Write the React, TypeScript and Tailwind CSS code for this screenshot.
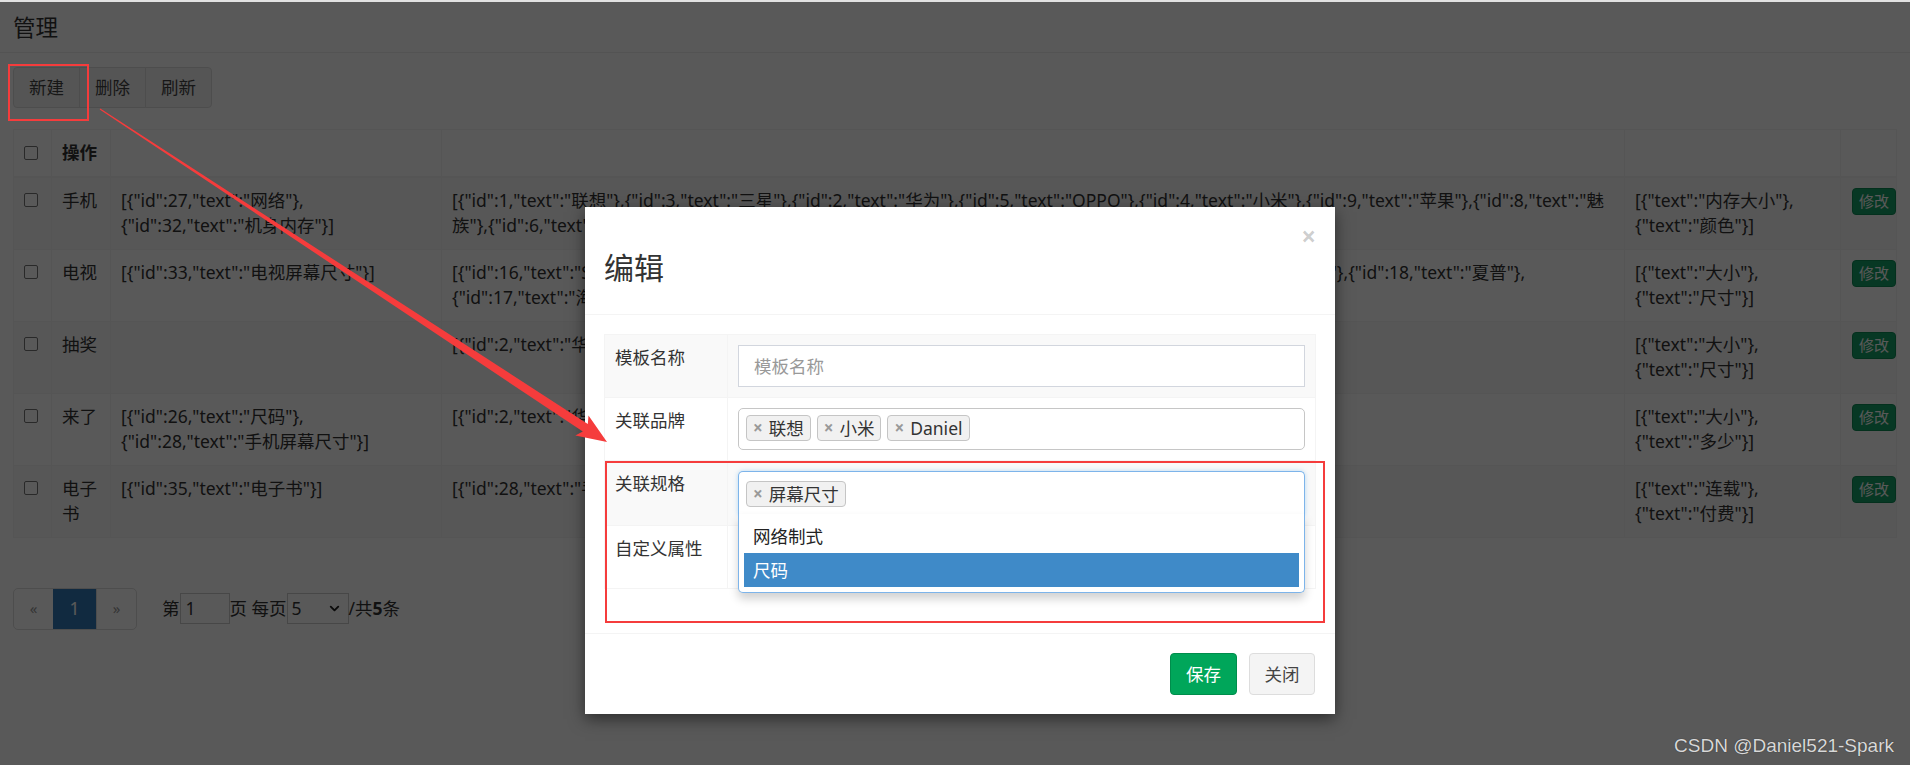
import clsx from 'clsx';
import { ChevronDown } from 'lucide-react';

type Row = {
  name: string;
  specs: string[];
  brands: string[];
  attrs: string[];
};

const rows: Row[] = [
  {
    name: '手机',
    specs: ['[{"id":27,"text":"网络"},', '{"id":32,"text":"机身内存"}]'],
    brands: [
      '[{"id":1,"text":"联想"},{"id":3,"text":"三星"},{"id":2,"text":"华为"},{"id":5,"text":"OPPO"},{"id":4,"text":"小米"},{"id":9,"text":"苹果"},{"id":8,"text":"魅',
      '族"},{"id":6,"text":"中兴"}]',
    ],
    attrs: ['[{"text":"内存大小"},', '{"text":"颜色"}]'],
  },
  {
    name: '电视',
    specs: ['[{"id":33,"text":"电视屏幕尺寸"}]'],
    brands: [
      '[{"id":16,"text":"Sony"},{"id":19,"text":"创维"},{"id":20,"text":"康佳"},{"id":21,"text":"长虹"},{"id":22,"text":"海尔"},{"id":18,"text":"夏普"},',
      '{"id":17,"text":"海信"}]',
    ],
    attrs: ['[{"text":"大小"},', '{"text":"尺寸"}]'],
  },
  {
    name: '抽奖',
    specs: [],
    brands: ['[{"id":2,"text":"华为"}]'],
    attrs: ['[{"text":"大小"},', '{"text":"尺寸"}]'],
  },
  {
    name: '来了',
    specs: ['[{"id":26,"text":"尺码"},', '{"id":28,"text":"手机屏幕尺寸"}]'],
    brands: ['[{"id":2,"text":"华为"},{"id":4,"text":"小米"}]'],
    attrs: ['[{"text":"大小"},', '{"text":"多少"}]'],
  },
  {
    name: '电子书',
    specs: ['[{"id":35,"text":"电子书"}]'],
    brands: ['[{"id":28,"text":"手机"}]'],
    attrs: ['[{"text":"连载"},', '{"text":"付费"}]'],
  },
];

function Checkbox() {
  return (
    <div className="flex h-[25px] items-center">
      <span className="inline-block size-[14px] rounded-[2px] border border-[#767676] bg-white" />
    </div>
  );
}

function Tag({ children }: { children: React.ReactNode }) {
  return (
    <span className="inline-flex h-[26px] items-center rounded-[4px] border border-[#c5c5c5] bg-[#f1f1f1] px-[6px] leading-[24px] text-[#333]">
      <span className="mr-[6px] text-[17px] font-bold text-[#999]">×</span>
      {children}
    </span>
  );
}

const cell = 'border border-[#f4f4f4] p-[10px] align-top';

export default function App() {
  return (
    <div className="relative h-[765px] w-[1910px] overflow-hidden bg-white font-['Noto_Sans','Noto_Sans_CJK_SC',sans-serif] text-[17.5px] leading-[25px] text-[#333]">
      <div className="h-[2px] bg-[#e2e2e2]" />

      {/* Page header */}
      <header className="flex h-[51px] items-center border-b border-[#eee] px-[13px] text-[22.5px]">
        管理
      </header>

      <div className="px-[13px]">
        {/* Toolbar */}
        <div className="mt-[14px] flex">
          {['新建', '删除', '刷新'].map((t, i) => (
            <button
              key={t}
              className={clsx(
                'h-[41px] border border-[#ddd] bg-[#f4f4f4] px-[15px] text-[#444]',
                i === 0 && 'rounded-l-[4px]',
                i === 2 && 'rounded-r-[4px]',
                i > 0 && '-ml-px'
              )}
            >
              {t}
            </button>
          ))}
        </div>

        {/* Table */}
        <table className="mt-[21px] w-full table-fixed border-collapse border border-[#f4f4f4] leading-[25.5px]">
          <colgroup>
            <col className="w-[38px]" />
            <col className="w-[59px]" />
            <col className="w-[331px]" />
            <col className="w-[1183px]" />
            <col className="w-[216px]" />
            <col />
          </colgroup>
          <thead>
            <tr>
              <th className="border border-b-2 border-[#f4f4f4] p-[10px] text-left align-bottom">
                <Checkbox />
              </th>
              <th className="border border-b-2 border-[#f4f4f4] p-[10px] text-left align-bottom font-bold">操作</th>
              <th className="border border-b-2 border-[#f4f4f4] p-[10px]" />
              <th className="border border-b-2 border-[#f4f4f4] p-[10px]" />
              <th className="border border-b-2 border-[#f4f4f4] p-[10px]" />
              <th className="border border-b-2 border-[#f4f4f4] p-[10px]" />
            </tr>
          </thead>
          <tbody>
            {rows.map((r, i) => (
              <tr key={r.name} className={i % 2 === 0 ? 'bg-[#f9f9f9]' : 'bg-white'}>
                <td className={cell}>
                  <Checkbox />
                </td>
                <td className={cell}>{r.name}</td>
                <td className={cell}>
                  {r.specs.map((l) => (
                    <div key={l} className="whitespace-nowrap">{l}</div>
                  ))}
                </td>
                <td className={clsx(cell, 'overflow-hidden')}>
                  {r.brands.map((l) => (
                    <div key={l} className="whitespace-nowrap">{l}</div>
                  ))}
                </td>
                <td className={cell}>
                  {r.attrs.map((l) => (
                    <div key={l} className="whitespace-nowrap">{l}</div>
                  ))}
                </td>
                <td className="border border-[#f4f4f4] py-[10px] pl-[11px] pr-0 align-top">
                  <button className="h-[27px] rounded-[4px] border border-[#0e8a55] bg-[#16a068] px-[6px] text-[15px] leading-[23px] text-white">
                    修改
                  </button>
                </td>
              </tr>
            ))}
          </tbody>
        </table>

        {/* Pagination */}
        <div className="mt-[50px] flex items-center">
          <div className="flex h-[42px] overflow-hidden rounded-[5px] border border-[#ddd]">
            <span className="flex w-[39px] items-center justify-center text-[15px] text-[#999]">«</span>
            <span className="flex w-[43px] items-center justify-center bg-[#337ab7] text-white">1</span>
            <span className="flex w-[40px] items-center justify-center border-l border-[#ddd] text-[15px] text-[#999]">»</span>
          </div>
          <span className="ml-[25px]">第</span>
          <span className="h-[31px] w-[50px] border border-[#ccc] px-[5px] leading-[29px]">1</span>
          <span>页 每页</span>
          <span className="flex h-[31px] w-[62px] items-center justify-between border border-[#ccc] pl-[4px] pr-[6px]">
            <span>5</span>
            <ChevronDown size={15} strokeWidth={3} className="text-[#222]" />
          </span>
          <span>
            /共<b>5</b>条
          </span>
        </div>
      </div>

      {/* Modal backdrop */}
      <div className="absolute inset-x-0 bottom-0 top-[2px] bg-black/65" />

      {/* Modal */}
      <div className="absolute left-[585px] top-[207px] w-[750px] bg-white shadow-[0_5px_15px_rgba(0,0,0,0.5)]">
        <div className="relative border-b border-[#f4f4f4] p-[19px]">
          <span className="absolute right-[19px] top-[16px] text-[26px] font-bold leading-none text-black/20">×</span>
          <h3 className="mb-[11px] mt-[25px] text-[30px] font-normal leading-[33px]">编辑</h3>
        </div>

        <div className="p-[19px]">
          <table className="mb-[25px] w-full table-fixed border-collapse border border-[#f4f4f4]">
            <colgroup>
              <col className="w-[123px]" />
              <col />
            </colgroup>
            <tbody>
              <tr className="bg-[#f9f9f9]">
                <td className={cell}>模板名称</td>
                <td className={cell}>
                  <div className="h-[42px] border border-[#d2d6de] bg-white px-[15px] leading-[40px] text-[#999]">
                    模板名称
                  </div>
                </td>
              </tr>
              <tr>
                <td className={cell}>关联品牌</td>
                <td className={cell}>
                  <div className="flex h-[42px] items-start gap-[6px] rounded-[5px] border border-[#c6c6c6] bg-white pl-[7px] pt-[6px]">
                    <Tag>联想</Tag>
                    <Tag>小米</Tag>
                    <Tag>Daniel</Tag>
                  </div>
                </td>
              </tr>
              <tr className="bg-[#f9f9f9]">
                <td className={cell}>关联规格</td>
                <td className={cell}>
                  <div className="relative">
                    <div className="h-[44px] rounded-t-[5px] border border-b-0 border-[#7db4ea] bg-white pl-[7px] pt-[9px] shadow-[0_0_5px_rgba(102,175,233,0.45)]">
                      <Tag>屏幕尺寸</Tag>
                    </div>
                    <div className="absolute left-0 right-0 top-[43px] z-10 rounded-b-[5px] border border-t-0 border-[#7db4ea] bg-white p-[5px] shadow-[0_6px_10px_rgba(0,0,0,0.18)]">
                      <div className="px-[9px] py-[7px] leading-[20px] text-[#222]">网络制式</div>
                      <div className="bg-[#3f8ac8] px-[9px] py-[7px] leading-[20px] text-white">尺码</div>
                    </div>
                  </div>
                </td>
              </tr>
              <tr>
                <td className={cell}>自定义属性</td>
                <td className={cell}>
                  <div className="h-[42px]" />
                </td>
              </tr>
            </tbody>
          </table>
        </div>

        <div className="flex justify-end gap-[12px] border-t border-[#f4f4f4] py-[19px] pr-[20px]">
          <button className="h-[42px] w-[67px] rounded-[4px] border border-[#008d4c] bg-[#00a65a] text-white">保存</button>
          <button className="h-[42px] w-[66px] rounded-[4px] border border-[#ddd] bg-[#f4f4f4] text-[#444]">关闭</button>
        </div>
      </div>

      {/* Annotations */}
      <svg className="pointer-events-none absolute left-0 top-0" width="1910" height="765">
        <rect x="9" y="65" width="79" height="55" fill="none" stroke="#f53c3c" strokeWidth="2" />
        <rect x="606" y="462" width="718" height="160" fill="none" stroke="#f53c3c" strokeWidth="2" />
        <polygon
          points="100.3,108.6 587.8,423.9 588.5,415.5 607,442 575.3,435.5 582.8,431.5 99.7,109.4"
          fill="#f53c3c"
        />
      </svg>

      {/* Watermark */}
      <div className="absolute right-[16px] top-[736px] font-['Liberation_Sans',sans-serif] text-[19px] leading-[19px] text-[#d8d8d8] [text-shadow:0_0_1px_rgba(0,0,0,0.6)]">
        CSDN @Daniel521-Spark
      </div>
    </div>
  );
}
